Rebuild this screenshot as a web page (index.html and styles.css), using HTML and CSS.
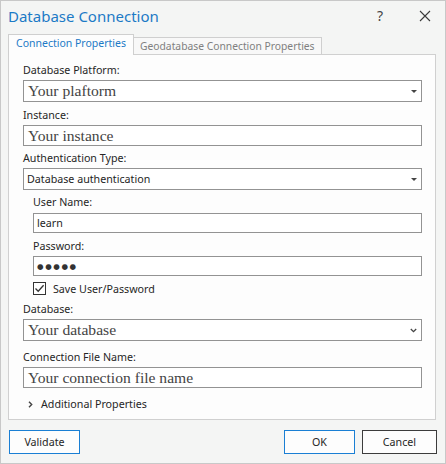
FILE: index.html
```html
<!DOCTYPE html>
<html lang="en">
<head>
<meta charset="utf-8">
<title>Database Connection</title>
<link rel="stylesheet" href="styles.css">
</head>
<body>
<div class="window">
  <header class="titlebar">
    <h1 class="title">Database Connection</h1>
    <div class="controls">
      <span class="help">?</span>
      <svg class="close" width="12" height="12" viewBox="0 0 12 12"><path d="M1 1 L11 11 M11 1 L1 11" stroke="#3a3a3a" stroke-width="1.1" fill="none"/></svg>
    </div>
  </header>
  <nav class="tabs">
    <div class="tab active">Connection Properties</div>
    <div class="tab">Geodatabase Connection Properties</div>
  </nav>
  <section class="panel">
    <div class="lbl first">Database Platform:</div>
    <div class="box h22 serif">Your plaftorm<span class="tri"></span></div>

    <div class="lbl">Instance:</div>
    <div class="box h21 serif">Your instance</div>

    <div class="lbl m4">Authentication Type:</div>
    <div class="box h22 sans">Database authentication<span class="tri"></span></div>

    <div class="sub">
      <div class="lbl m4">User Name:</div>
      <div class="box h20 sans m3">learn</div>
      <div class="lbl">Password:</div>
      <div class="box h20 sans"><span class="dots">●●●●●</span></div>
      <div class="check-row">
        <span class="checkbox"><svg width="11" height="11" viewBox="0 0 11 11"><path d="M1.5 5.5 L4.2 8.3 L9.6 2.2" stroke="#333" stroke-width="1.3" fill="none"/></svg></span>
        <span class="check-text">Save User/Password</span>
      </div>
    </div>

    <div class="lbl m6">Database:</div>
    <div class="box h22 serif">Your database<svg class="chev" width="7" height="5" viewBox="0 0 7 5"><path d="M0.8 1 L3.5 3.7 L6.2 1" stroke="#444" stroke-width="1.3" fill="none"/></svg></div>

    <div class="lbl m8">Connection File Name:</div>
    <div class="box h21 serif">Your connection file name</div>

    <div class="expander">
      <svg class="caret" width="5" height="7" viewBox="0 0 5 7"><path d="M1 0.8 L3.7 3.5 L1 6.2" stroke="#444" stroke-width="1.4" fill="none"/></svg>
      <span>Additional Properties</span>
    </div>
  </section>
  <footer class="buttons">
    <button class="btn primary">Validate</button>
    <div class="spacer"></div>
    <button class="btn primary">OK</button>
    <button class="btn cancel">Cancel</button>
  </footer>
</div>
</body>
</html>
```

FILE: styles.css
```css
* { box-sizing: border-box; }
html, body { margin: 0; padding: 0; }
body {
  font-family: "Noto Sans", "Open Sans", sans-serif;
  font-size: 10.7px;
  color: #262626;
}
.window {
  width: 446px;
  height: 464px;
  border: 1px solid #c8c8c8;
  background: #f4f5f4;
  display: flex;
  flex-direction: column;
}
.titlebar {
  height: 33px;
  display: flex;
  align-items: flex-start;
  justify-content: space-between;
}
.title {
  margin: 0;
  padding: 4px 0 0 7px;
  font-size: 15px;
  line-height: 22px;
  font-weight: 400;
  color: #1c7ac6;
}
.controls {
  display: flex;
  align-items: center;
  padding-top: 8px;
}
.help {
  font-size: 14px;
  line-height: 14px;
  color: #444;
  margin-right: 36px;
}
.close { margin-right: 14px; display: block; }
.tabs {
  height: 20px;
  display: flex;
  align-items: flex-end;
  margin-left: 7px;
}
.tab {
  height: 17px;
  border: 1px solid #cfcfcf;
  border-bottom: none;
  background: #f8f8f8;
  color: #808080;
  padding: 0 6px 0 6px;
  line-height: 16px;
  margin-left: -1px;
  font-size: 10.3px;
}
.tab.active {
  height: 21px;
  margin-bottom: -1px;
  margin-left: 0;
  background: #fdfdfd;
  color: #1c7ac6;
  position: relative;
  z-index: 1;
  padding: 0 7px 0 7px;
  line-height: 17px;
  font-size: 10.5px;
}
.panel {
  margin: 0 9px 0 7px;
  height: 366px;
  border: 1px solid #d0d0d0;
  background: #fdfdfd;
  padding: 0 13px 0 14px;
}
.lbl {
  height: 16px;
  line-height: 16px;
  margin-top: 5px;
}
.lbl.first { margin-top: 7px; }
.lbl.m4 { margin-top: 4px; }
.lbl.m6 { margin-top: 6px; }
.lbl.m8 { margin-top: 8px; }
.box {
  position: relative;
  margin-top: 2px;
  border: 1px solid #939393;
  background: #fff;
  display: flex;
  align-items: center;
  padding-left: 4px;
}
.box.m3 { margin-top: 3px; }
.h22 { height: 22px; }
.h21 { height: 21px; }
.h20 { height: 20px; }
.serif {
  font-family: "Liberation Serif", "DejaVu Serif", serif;
  font-size: 15.6px;
  color: #444;
}
.sans {
  font-size: 10.7px;
  color: #1e1e1e;
  padding-left: 3px;
}
.tri {
  position: absolute;
  right: 4px;
  top: 9px;
  width: 0;
  height: 0;
  border-left: 3px solid transparent;
  border-right: 3px solid transparent;
  border-top: 3px solid #444;
}
.chev {
  position: absolute;
  right: 4px;
  top: 8px;
}
.sub { padding-left: 10px; }
.dots {
  font-family: "DejaVu Sans", sans-serif;
  font-size: 7.5px;
  letter-spacing: 1.6px;
  color: #333;
}
.check-row {
  display: flex;
  align-items: center;
  margin-top: 6px;
  height: 13px;
}
.checkbox {
  width: 13px;
  height: 13px;
  border: 1px solid #333;
  background: #fff;
  display: flex;
  align-items: center;
  justify-content: center;
}
.checkbox svg { display: block; }
.check-text { margin-left: 7px; }
.expander {
  display: flex;
  align-items: center;
  margin-top: 8px;
  height: 16px;
  padding-left: 5px;
}
.caret { display: block; margin-right: 8px; }
.buttons {
  display: flex;
  align-items: flex-start;
  padding: 10px 8px 0 8px;
}
.spacer { flex: 1; }
.btn {
  font-family: "Noto Sans", "Open Sans", sans-serif;
  font-size: 10.7px;
  color: #262626;
  height: 24px;
  background: #fdfdfd;
  padding: 0;
  margin: 0;
}
.btn.primary { border: 1px solid #1a7fd4; width: 71px; }
.btn.cancel { border: 1px solid #3c3c3c; width: 75px; margin-left: 7px; }
```
